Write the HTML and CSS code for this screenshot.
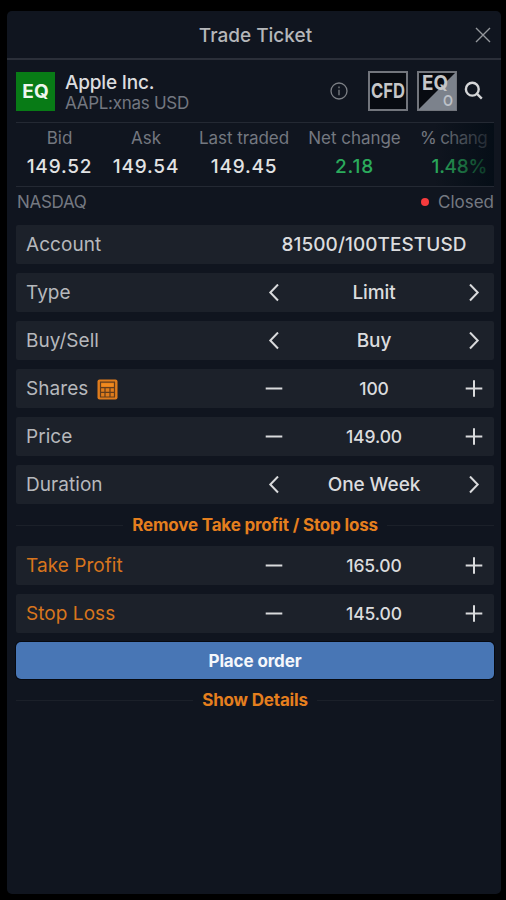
FILE: index.html
```html
<!DOCTYPE html>
<html lang="en">
<head>
<meta charset="utf-8">
<title>Trade Ticket</title>
<link rel="stylesheet" href="styles.css">
</head>
<body>
<svg class="defs" width="0" height="0">
  <symbol id="left" viewBox="0 0 18 18"><path d="M13 .5 5.3 8.5l7.7 8"/></symbol>
  <symbol id="right" viewBox="0 0 18 18"><path d="m5 .5 7.7 8-7.7 8"/></symbol>
  <symbol id="minus" viewBox="0 0 18 18"><path d="M.7 8.5h16.6"/></symbol>
  <symbol id="plus" viewBox="0 0 18 18"><path d="M.7 8.5h16.6M9 .2v16.6"/></symbol>
</svg>
<main class="panel">
  <header class="titlebar">
    <h1 class="title">Trade Ticket</h1>
    <svg class="close" viewBox="0 0 16 16"><path d="m1 1 14 14M15 1 1 15"/></svg>
  </header>
  <div class="content">
    <section class="instrument">
      <div class="badge">EQ</div>
      <div class="names">
        <div class="name">Apple Inc.</div>
        <div class="symbol">AAPL:xnas USD</div>
      </div>
      <svg class="info" viewBox="0 0 18 18"><circle cx="9" cy="9" r="8"/><path d="M9 7.7v5.6M9 4.6v1.6"/></svg>
      <svg class="tile" viewBox="0 0 40 40">
        <rect x="1" y="1" width="38" height="38" fill="#080b11" stroke="#72757c" stroke-width="2"/>
        <text class="tile-text" x="3" y="27" textLength="34" lengthAdjust="spacingAndGlyphs">CFD</text>
      </svg>
      <svg class="tile option" viewBox="0 0 40 40">
        <rect x="1" y="1" width="38" height="38" fill="#080b11" stroke="#72757c" stroke-width="2"/>
        <path d="M1 39 39 1v38z" fill="#7c828c"/>
        <text class="tile-text" x="5" y="19" textLength="26" lengthAdjust="spacingAndGlyphs">EQ</text>
        <text class="tile-small" x="26" y="34.5" textLength="10" lengthAdjust="spacingAndGlyphs">O</text>
      </svg>
      <svg class="search" viewBox="0 0 20 20"><circle cx="8.3" cy="8.2" r="6.4"/><path d="m12.8 12.7 5 5"/></svg>
    </section>
    <section class="stats">
      <div class="stat"><span class="key">Bid</span><span class="num">149.52</span></div>
      <div class="stat"><span class="key">Ask</span><span class="num">149.54</span></div>
      <div class="stat"><span class="key">Last traded</span><span class="num">149.45</span></div>
      <div class="stat"><span class="key">Net change</span><span class="num up">2.18</span></div>
      <div class="stat last"><span class="key">% chang</span><span class="num up">1.48%</span></div>
    </section>
    <div class="market"><span>NASDAQ</span><span class="status"><i class="dot"></i>Closed</span></div>
    <section class="rows">
      <div class="row"><span class="label">Account</span><span class="account">81500/100TESTUSD</span></div>
      <div class="row"><span class="label">Type</span><svg class="ic"><use href="#left"/></svg><span class="value">Limit</span><svg class="ic"><use href="#right"/></svg></div>
      <div class="row"><span class="label">Buy/Sell</span><svg class="ic"><use href="#left"/></svg><span class="value">Buy</span><svg class="ic"><use href="#right"/></svg></div>
      <div class="row"><span class="label">Shares
        <svg class="calc" viewBox="0 0 21 21"><rect x=".5" y=".5" width="20" height="20" rx="2" fill="#df7c1c"/><path d="M3 3.2h15M3 8.7h15M3.5 3v15M17.5 3v15M3 18h15M3 13.3h15M8 9v9M13 9v9" stroke="#623c1c" stroke-width="1.2"/><path d="M4.5 5.9h12" stroke="#f18a1e" stroke-width="3"/></svg></span><svg class="ic"><use href="#minus"/></svg><span class="value number">100</span><svg class="ic"><use href="#plus"/></svg></div>
      <div class="row"><span class="label">Price</span><svg class="ic"><use href="#minus"/></svg><span class="value number">149.00</span><svg class="ic"><use href="#plus"/></svg></div>
      <div class="row"><span class="label">Duration</span><svg class="ic"><use href="#left"/></svg><span class="value">One Week</span><svg class="ic"><use href="#right"/></svg></div>
    </section>
    <div class="divider"><span class="toggle">Remove Take profit / Stop loss</span></div>
    <section class="rows">
      <div class="row"><span class="label accent">Take Profit</span><svg class="ic"><use href="#minus"/></svg><span class="value number">165.00</span><svg class="ic"><use href="#plus"/></svg></div>
      <div class="row"><span class="label accent">Stop Loss</span><svg class="ic"><use href="#minus"/></svg><span class="value number">145.00</span><svg class="ic"><use href="#plus"/></svg></div>
    </section>
    <button class="place">Place order</button>
    <div class="divider details"><span class="toggle">Show Details</span></div>
  </div>
</main>
</body>
</html>
```
FILE: styles.css
```css
* { box-sizing: border-box; }
body {
  margin: 0;
  height: 900px;
  padding: 11px 5px 6px 7px;
  background: #000;
  font-family: Inter, sans-serif;
  overflow: hidden;
}
.defs { display: block; height: 0; }
.panel { height: 883px; background: #10151f; border-radius: 5px; }
.titlebar {
  display: grid;
  grid-template-columns: 26px 1fr 26px;
  align-items: center;
  height: 49px;
  border-bottom: 2px solid #2b2f39;
}
.title {
  grid-column: 2;
  margin: 1px 0 0 3px;
  text-align: center;
  font-size: 19px;
  font-weight: 500;
  color: #b5b7ba;
}
.close { width: 16px; height: 16px; fill: none; stroke: #94979c; stroke-width: 1.4; justify-self: start; }
.content { padding: 0 7px 0 9px; }
.instrument { display: flex; align-items: center; height: 62px; }
.badge {
  width: 39px; height: 39px;
  background: #087b16;
  color: #eef6ee;
  font-size: 19px; font-weight: 700;
  line-height: 40px; text-align: center;
}
.names { flex: 1; padding: 2px 0 0 10px; }
.name { font-size: 19px; line-height: 22px; font-weight: 500; letter-spacing: -.2px; color: #dcdddf; }
.symbol { font-size: 17px; line-height: 19px; letter-spacing: -.28px; color: #737780; }
.info { width: 18px; height: 18px; margin-right: 20px; fill: none; stroke: #7d8086; stroke-width: 1.3; }
.tile { width: 40px; height: 40px; }
.option { margin-left: 9px; }
.tile-text { font-size: 20px; font-weight: 700; fill: #c5c6c8; }
.tile-small { font-size: 15px; font-weight: 600; fill: #bdc1c8; }
.search { width: 20px; height: 20px; margin: 0 10px 0 7px; fill: none; stroke: #d5d6d8; stroke-width: 2.4; }
.stats {
  position: relative;
  display: grid;
  grid-template-columns: 87px 86px 110px 111px 84px;
  height: 65px;
  border-top: 1px solid #242933;
  border-bottom: 1px solid #242933;
  overflow: hidden;
}
.stats::after {
  content: "";
  position: absolute;
  inset: 0 0 0 auto;
  width: 60px;
  background: linear-gradient(90deg, #030c1500, #030c15d0);
}
.stat { display: flex; flex-direction: column; align-items: center; padding-top: 4px; white-space: nowrap; }
.last { align-items: flex-end; padding-right: 7px; }
.key { font-size: 17px; line-height: 22px; color: #747880; letter-spacing: -.05px; }
.num { font-size: 19px; line-height: 35px; font-weight: 500; color: #e2e3e4; letter-spacing: .8px; }
.up { color: #2bab5c; }
.last .key { letter-spacing: -.6px; }
.last .num { letter-spacing: -.3px; }
.market { display: flex; justify-content: space-between; height: 38px; padding-left: 1px; line-height: 30px; font-size: 17px; letter-spacing: -.3px; color: #757982; }
.status { display: flex; align-items: center; height: 29px; letter-spacing: 0; }
.dot { width: 8px; height: 8px; border-radius: 50%; background: #f63b3d; margin-right: 9px; }
.rows { display: grid; gap: 9px; }
.row {
  display: grid;
  grid-template-columns: 1fr 18px 182px 18px;
  align-items: center;
  height: 39px;
  padding: 0 11px 0 10px;
  border-radius: 2px;
  background: #1c212a;
}
.label { display: flex; align-items: center; gap: 9px; font-size: 19px; letter-spacing: .05px; color: #b6b8bc; }
.value, .account { font-size: 19px; font-weight: 500; letter-spacing: -.1px; text-align: center; color: #dbdcde; }
.account { grid-column: 2 / 5; letter-spacing: .05px; }
.number { font-size: 17.5px; }
.accent { color: #d8751d; }
.ic { width: 18px; height: 18px; fill: none; stroke: #d9dadc; stroke-width: 2; }
.calc { width: 21px; height: 21px; margin-top: 2px; fill: none; }
.divider { display: flex; align-items: center; gap: 9px; height: 42px; }
.divider::before, .divider::after { content: ""; flex: 1; height: 1px; background: #1b2029; }
.toggle { font-size: 17px; font-weight: 700; letter-spacing: -.17px; color: #e57f1e; }
.place {
  display: block;
  width: 100%; height: 37px;
  margin-top: 9px;
  border: 0; border-radius: 5px;
  background: #4876b5;
  box-shadow: 0 0 0 1px #060910;
  color: #f5f7fb;
  font: 700 17px/37px Inter, sans-serif;
  letter-spacing: -.12px;
}
```
